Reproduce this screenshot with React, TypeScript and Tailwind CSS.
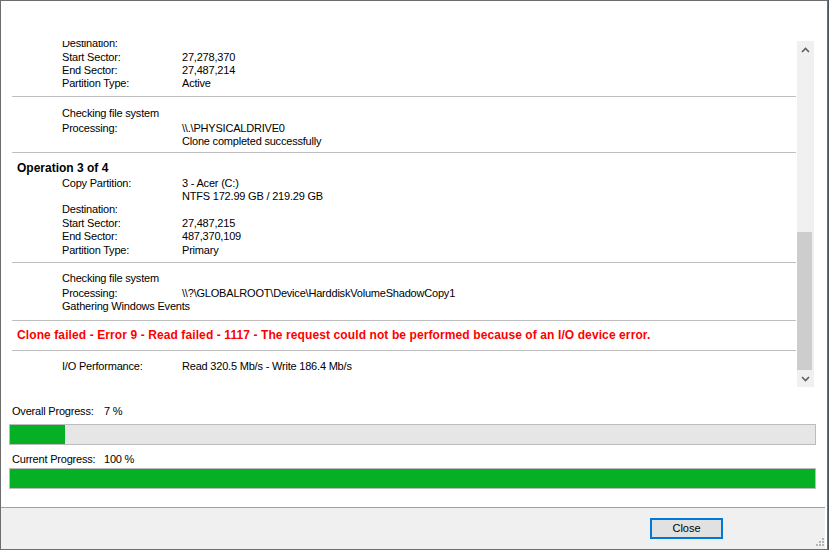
import React from 'react';

const font = { fontFamily: '"Liberation Sans", Arial, sans-serif' };

function Row({ label, value, className = '' }: { label: string; value?: string; className?: string }) {
   return (
      <div className={`flex h-[13px] leading-[15px] pl-[50px] whitespace-nowrap ${className}`}>
         <div className="w-[120px] shrink-0">{label}</div>
         {value && <div>{value}</div>}
      </div>
   );
}

function Line({ className = '' }: { className?: string }) {
   return <div className={`h-px bg-[#bfbfbf] ${className}`} />;
}

function Bar({ pct, className = '' }: { pct: number; className?: string }) {
   return (
      <div className={`ml-[8px] w-[807px] h-[21px] border border-[#bcbcbc] bg-[#e6e6e6] ${className}`}>
         <div className="h-full bg-[#06b025]" style={{ width: `${pct}%` }} />
      </div>
   );
}

export default function App() {
   return (
      <div className="w-[829px] h-[550px] bg-[#4a5563] text-[11px] tracking-[-0.2px] text-black" style={font}>
         <div className="relative w-[828px] h-[550px] border border-[#6d6d6d] bg-white flex flex-col">
            <div className="h-[40px] shrink-0" />
            {/* log viewport */}
            <div className="flex h-[346px] shrink-0">
               <div className="ml-[11px] w-[784px] overflow-hidden">
                  <Row label="Destination:" className="-mt-[5px] mb-px" />
                  <Row label="Start Sector:" value="27,278,370" />
                  <Row label="End Sector:" value="27,487,214" />
                  <Row label="Partition Type:" value="Active" />
                  <Line className="mt-[7px]" />
                  <Row label="Checking file system" className="mt-[9px]" />
                  <Row label="Processing:" value="\\.\PHYSICALDRIVE0" className="mt-[2px]" />
                  <Row label="" value="Clone completed successfully" />
                  <Line className="mt-[5px]" />
                  <div className="mt-[6px] h-[15px] leading-[19px] pl-[5px] font-bold text-[12px] tracking-normal">Operation 3 of 4</div>
                  <Row label="Copy Partition:" value="3 - Acer (C:)" className="mt-[2px]" />
                  <Row label="" value="NTFS 172.99 GB / 219.29 GB" />
                  <Row label="Destination:" />
                  <Row label="Start Sector:" value="27,487,215" className="mt-px" />
                  <Row label="End Sector:" value="487,370,109" />
                  <Row label="Partition Type:" value="Primary" className="mt-px" />
                  <Line className="mt-[6px]" />
                  <Row label="Checking file system" className="mt-[8px]" />
                  <Row label="Processing:" value="\\?\GLOBALROOT\Device\HarddiskVolumeShadowCopy1" className="mt-[2px]" />
                  <div className="h-[13px] leading-[15px] pl-[50px] whitespace-nowrap">Gathering Windows Events</div>
                  <Line className="mt-[8px]" />
                  <div className="mt-[7px] h-[15px] leading-[15px] pl-[5px] font-bold text-[12px] text-[#ff0000] whitespace-nowrap tracking-[0.1px]">
                     Clone failed - Error 9 - Read failed - 1117 - The request could not be performed because of an I/O device error.
                  </div>
                  <Line className="mt-[7px]" />
                  <Row label="I/O Performance:" value="Read 320.5 Mb/s - Write 186.4 Mb/s" className="mt-[8px]" />
               </div>
               {/* scrollbar */}
               <div className="ml-px w-[17px] bg-[#f0f0f0] flex flex-col">
                  <div className="h-[17px] flex items-center justify-center">
                     <svg width="9" height="6" viewBox="0 0 9 6"><path d="M1 5 L4.5 1.5 L8 5" fill="none" stroke="#606060" strokeWidth="1.6" /></svg>
                  </div>
                  <div className="flex-1" />
                  <div className="h-[138px] w-[15px] bg-[#cdcdcd]" />
                  <div className="h-[17px] flex items-center justify-center">
                     <svg width="9" height="6" viewBox="0 0 9 6"><path d="M1 1 L4.5 4.5 L8 1" fill="none" stroke="#606060" strokeWidth="1.6" /></svg>
                  </div>
               </div>
            </div>
            {/* progress */}
            <div className="mt-[17px] flex h-[13px] leading-[15px] pl-[11px]">
               <div className="w-[92px]">Overall Progress:</div>
               <div>7 %</div>
            </div>
            <Bar pct={6.8} className="mt-[7px]" />
            <div className="mt-[8px] flex h-[13px] leading-[13px] pl-[11px]">
               <div className="w-[92px]">Current Progress:</div>
               <div>100 %</div>
            </div>
            <Bar pct={100} className="mt-[2px]" />
            {/* footer */}
            <div className="mt-auto h-[42px] mr-[2px] border-t border-[#a0a0a0] bg-[#f0f0f0] flex justify-end pt-[10px] pr-[102px]">
               <button className="w-[73px] h-[21px] border-2 border-[#0078d7] bg-[#e1e1e1] text-[11px] leading-[17px] text-black tracking-normal">Close</button>
            </div>
            <svg className="absolute right-[2px] bottom-[2px]" width="10" height="10" viewBox="0 0 10 10" fill="#b4b4b4">
               <rect x="7" y="1" width="2" height="2" />
               <rect x="4" y="4" width="2" height="2" />
               <rect x="7" y="4" width="2" height="2" />
               <rect x="1" y="7" width="2" height="2" />
               <rect x="4" y="7" width="2" height="2" />
               <rect x="7" y="7" width="2" height="2" />
            </svg>
         </div>
      </div>
   );
}
